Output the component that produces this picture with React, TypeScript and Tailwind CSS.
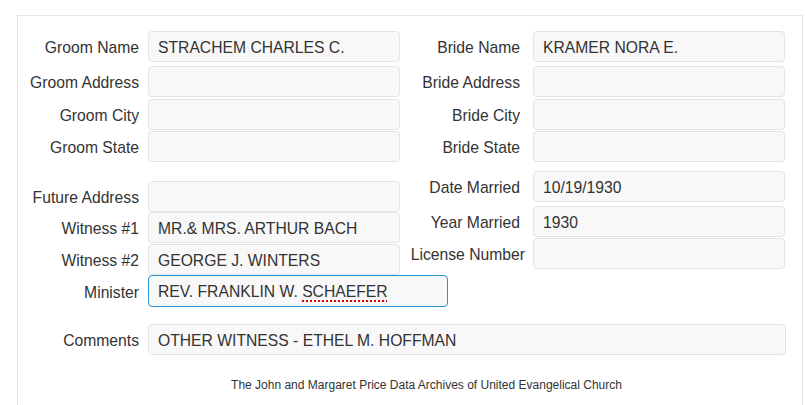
import React from "react";

type FieldProps = {
  label: string;
  value?: React.ReactNode;
  labelW: string;
  inputW: string;
  h?: string;
  mt?: string;
  labelPr?: string;
  active?: boolean;
};

const Field = ({ label, value, labelW, inputW, h = "h-[31px]", mt = "", labelPr = "pr-[9px]", active }: FieldProps) => {
  return (
    <div className={`flex ${h} ${mt}`}>
      <div className={`${labelW} ${labelPr} flex items-center justify-end pt-[3px] whitespace-nowrap text-[#333]`}>
        {label}
      </div>
      <div
        className={`${inputW} h-full flex items-center pl-[9px] pt-[2px] rounded-[4px] border bg-[#f8f8f8] text-[#333] whitespace-nowrap ${
          active ? "border-[#2a93d5]" : "border-[#e4e4e4]"
        }`}
      >
        {value}
      </div>
    </div>
  );
};

export default function App() {
  const L = { labelW: "w-[130px]", inputW: "w-[252px]" };
  const R = { labelW: "w-[133px]", inputW: "w-[252px]", labelPr: "pr-[13px]" };

  return (
    <div className="w-[805px] h-[405px] overflow-hidden bg-white text-[15.7px]" style={{ fontFamily: '"Liberation Sans", Arial, sans-serif' }}>
      <div className="ml-[17px] mt-[15px] w-[786px] border border-[#e6e6e6] pt-[15px] pb-[40px]">
        {/* top section */}
        <div className="flex">
          <div className="flex flex-col">
            <Field {...L} label="Groom Name" value="STRACHEM CHARLES C." />
            <Field {...L} label="Groom Address" mt="mt-[4px]" />
            <Field {...L} label="Groom City" mt="mt-[2px]" />
            <Field {...L} label="Groom State" mt="mt-[1px]" />
          </div>
          <div className="flex flex-col">
            <Field {...R} label="Bride Name" value="KRAMER NORA E." />
            <Field {...R} label="Bride Address" mt="mt-[4px]" />
            <Field {...R} label="Bride City" mt="mt-[2px]" />
            <Field {...R} label="Bride State" mt="mt-[1px]" />
          </div>
        </div>

        {/* second section */}
        <div className="flex items-start">
          <div className="flex flex-col mt-[19px]">
            <Field {...L} label="Future Address" />
            <Field {...L} label="Witness #1" value="MR.& MRS. ARTHUR BACH" />
            <Field {...L} label="Witness #2" value="GEORGE J. WINTERS" mt="mt-[1px]" />
            <Field
              {...L}
              inputW="w-[300px]"
              h="h-[32px]"
              active
              label="Minister"
              value={
                <span>
                  REV. FRANKLIN W.{" "}
                  <span className="underline decoration-dotted decoration-[#e00000] decoration-[1.5px] underline-offset-[3px]">
                    SCHAEFER
                  </span>
                </span>
              }
            />
          </div>
          <div className="flex flex-col mt-[9px] -ml-[48px]">
            <Field {...R} label="Date Married" value="10/19/1930" />
            <Field {...R} label="Year Married" value="1930" mt="mt-[4px]" />
            <Field {...R} labelPr="pr-[8px]" label="License Number" mt="mt-[1px]" />
          </div>
        </div>

        {/* comments */}
        <div className="mt-[17px]">
          <Field labelW="w-[130px]" inputW="w-[638px]" label="Comments" value="OTHER WITNESS - ETHEL M. HOFFMAN" />
        </div>

        <div className="mt-[23px] pl-[33px] text-center text-[12px] leading-[14px] text-[#333]">
          The John and Margaret Price Data Archives of United Evangelical Church
        </div>
      </div>
    </div>
  );
}
